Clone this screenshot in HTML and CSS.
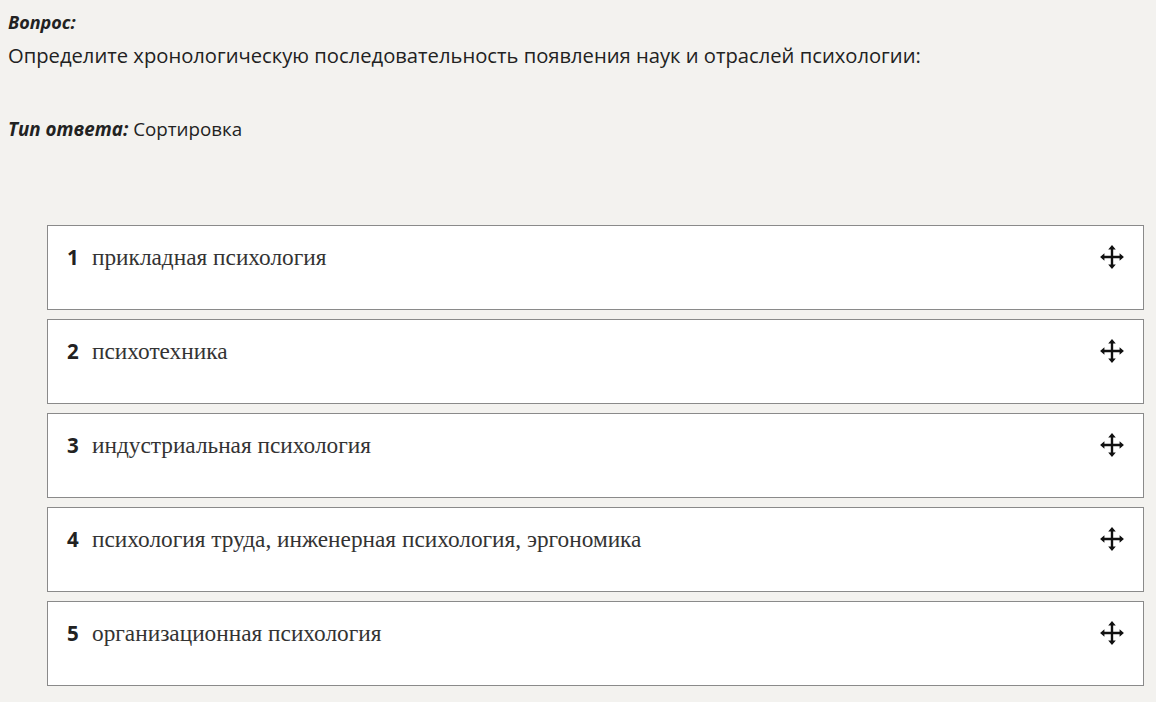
FILE: index.html
```html
<!DOCTYPE html>
<html lang="ru">
<head>
    <meta charset="UTF-8">
    <title>Вопрос</title>
    <link rel="stylesheet" href="styles.css">
</head>
<body>
    <div class="question">
        <div class="question-label">Вопрос:</div>
        <div class="question-text">Определите хронологическую последовательность появления наук и отраслей психологии:</div>
    </div>
    <div class="answer-type"><span class="answer-type-label">Тип ответа:</span> Сортировка</div>

    <ul class="sort-list">
        <li class="sort-item"><span class="num">1</span><span class="text">прикладная психология</span><svg class="move" viewBox="0 0 24 24"><path d="M12 3 L12 21 M3 12 L21 12" /><path class="head" d="M12 1 L15.5 5 L8.5 5 Z M12 23 L15.5 19 L8.5 19 Z M1 12 L5 8.5 L5 15.5 Z M23 12 L19 8.5 L19 15.5 Z" /></svg></li>
        <li class="sort-item"><span class="num">2</span><span class="text">психотехника</span><svg class="move" viewBox="0 0 24 24"><path d="M12 3 L12 21 M3 12 L21 12" /><path class="head" d="M12 1 L15.5 5 L8.5 5 Z M12 23 L15.5 19 L8.5 19 Z M1 12 L5 8.5 L5 15.5 Z M23 12 L19 8.5 L19 15.5 Z" /></svg></li>
        <li class="sort-item"><span class="num">3</span><span class="text">индустриальная психология</span><svg class="move" viewBox="0 0 24 24"><path d="M12 3 L12 21 M3 12 L21 12" /><path class="head" d="M12 1 L15.5 5 L8.5 5 Z M12 23 L15.5 19 L8.5 19 Z M1 12 L5 8.5 L5 15.5 Z M23 12 L19 8.5 L19 15.5 Z" /></svg></li>
        <li class="sort-item"><span class="num">4</span><span class="text">психология труда, инженерная психология, эргономика</span><svg class="move" viewBox="0 0 24 24"><path d="M12 3 L12 21 M3 12 L21 12" /><path class="head" d="M12 1 L15.5 5 L8.5 5 Z M12 23 L15.5 19 L8.5 19 Z M1 12 L5 8.5 L5 15.5 Z M23 12 L19 8.5 L19 15.5 Z" /></svg></li>
        <li class="sort-item"><span class="num">5</span><span class="text">организационная психология</span><svg class="move" viewBox="0 0 24 24"><path d="M12 3 L12 21 M3 12 L21 12" /><path class="head" d="M12 1 L15.5 5 L8.5 5 Z M12 23 L15.5 19 L8.5 19 Z M1 12 L5 8.5 L5 15.5 Z M23 12 L19 8.5 L19 15.5 Z" /></svg></li>
    </ul>
</body>
</html>
```

FILE: styles.css
```css
* {
    box-sizing: border-box;
}

body {
    margin: 0;
    padding: 8px 12px 0 8px;
    background: #f3f2ef;
    color: #222;
    font-family: "Open Sans", "Noto Sans", sans-serif;
}

.question-label {
    font-size: 18px;
    font-weight: bold;
    font-style: italic;
    line-height: 28px;
}

.question-text {
    margin-top: 3px;
    font-size: 20.2px;
    line-height: 32px;
}

.answer-type {
    margin-top: 44px;
    font-size: 18.8px;
    line-height: 28px;
}

.answer-type-label {
    font-weight: bold;
    font-style: italic;
}

/* список для сортировки */
.sort-list {
    list-style: none;
    margin: 82px 0 0 39px;
    padding: 0;
    display: flex;
    flex-direction: column;
    gap: 9px;
}

.sort-item {
    height: 85px;
    display: flex;
    align-items: flex-start;
    padding: 17px 18px 0 19px;
    background: #fff;
    border: 1px solid #8a8a8a;
}

.num {
    font-weight: bold;
    font-size: 20.5px;
    line-height: 28px;
    width: 25px;
}

.text {
    flex: 1;
    font-family: "Liberation Serif", serif;
    font-size: 23.3px;
    line-height: 28px;
    color: #333;
}

.move {
    width: 26px;
    height: 26px;
    margin-top: 1px;
}

.move path {
    stroke: #111;
    stroke-width: 2.2;
    fill: none;
}

.move path.head {
    stroke: none;
    fill: #111;
}
```
